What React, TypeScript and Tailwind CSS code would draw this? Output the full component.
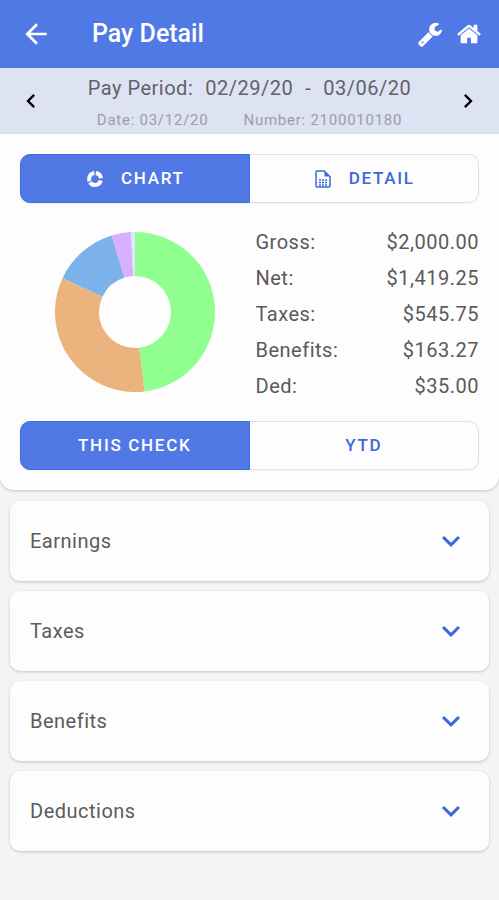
import { useId, useState } from 'react'
import type { ReactNode } from 'react'
import clsx from 'clsx'
import { MdArrowBack, MdChevronLeft, MdChevronRight, MdExpandMore } from 'react-icons/md'

const SUMMARY = [
  { label: 'Gross:', value: '$2,000.00' },
  { label: 'Net:', value: '$1,419.25' },
  { label: 'Taxes:', value: '$545.75' },
  { label: 'Benefits:', value: '$163.27' },
  { label: 'Ded:', value: '$35.00' },
]

const SECTIONS = ['Earnings', 'Taxes', 'Benefits', 'Deductions']

// Shares of the whole ring, clockwise from twelve o'clock.
const SLICES = [
  { share: 0.481, color: '#90ff90' },
  { share: 0.339, color: '#ebb47e' },
  { share: 0.133, color: '#7cb2ea' },
  { share: 0.039, color: '#d8b0ff' },
  { share: 0.008, color: '#dde8fb' },
]

function slicePath(from: number, to: number, outer: number, inner: number) {
  const point = (t: number, r: number) =>
    `${80 + r * Math.sin(t * 2 * Math.PI)} ${80 - r * Math.cos(t * 2 * Math.PI)}`
  const large = to - from > 0.5 ? 1 : 0
  return `M${point(from, outer)}A${outer} ${outer} 0 ${large} 1 ${point(to, outer)}L${point(to, inner)}A${inner} ${inner} 0 ${large} 0 ${point(from, inner)}Z`
}

function DonutChart() {
  let start = 0
  return (
    <svg viewBox="0 0 160 160" className="size-40" role="img" aria-label="Pay breakdown">
      {SLICES.map(({ share, color }) => {
        const d = slicePath(start, start + share, 80, 36)
        start += share
        return <path key={color} d={d} fill={color} />
      })}
    </svg>
  )
}

function WrenchIcon() {
  return (
    <svg viewBox="0 0 1792 1792" className="size-[26px]" fill="currentColor" aria-hidden="true">
      <path d="M448 1472q0-26-19-45t-45-19-45 19-19 45 19 45 45 19 45-19 19-45zm644-420l-682 682q-37 37-90 37-52 0-91-37l-106-108q-38-36-38-90 0-53 38-91l681-681q39 98 114.500 173.500t173.500 114.500zm634-435q0 39-23 106-47 134-164.500 217.500t-258.500 83.500q-185 0-316.500-131.500t-131.500-316.500 131.500-316.500 316.500-131.500q58 0 121.500 16.500t107.500 46.500q16 11 16 28t-16 28l-293 169v224l193 107q5-3 79-48.500t135.500-81 70.500-35.500q15 0 23.500 10t8.500 25z" />
    </svg>
  )
}

function HomeIcon() {
  return (
    <svg viewBox="0 0 1792 1792" className="size-[26px]" fill="currentColor" aria-hidden="true">
      <path d="M1472 992v480q0 26-19 45t-45 19h-384v-384h-256v384h-384q-26 0-45-19t-19-45v-480q0-1 .5-3t.5-3l575-474 575 474q1 2 1 6zm223-69l-62 74q-8 9-21 11h-3q-13 0-21-7l-692-577-692 577q-12 8-24 7-13-2-21-11l-62-74q-8-10-7-23.500t11-21.500l719-599q32-26 76-26t76 26l244 204v-195q0-14 9-23t23-9h192q14 0 23 9t9 23v408l219 182q10 8 11 21.500t-7 23.500z" />
    </svg>
  )
}

function DonutIcon() {
  return (
    <svg viewBox="0 0 20 20" className="size-5" fill="none" stroke="currentColor" strokeWidth="4" aria-hidden="true">
      <path d="M10.800 4.050A6 6 0 0 1 15.950 9.300" />
      <path d="M15.800 11.500A6 6 0 0 1 5 13.300" />
      <path d="M4.400 12.200A6 6 0 0 1 9.300 4.050" />
    </svg>
  )
}

function SheetIcon() {
  return (
    <svg viewBox="0 0 20 20" className="size-5" fill="none" stroke="currentColor" aria-hidden="true">
      <path d="M12 2H4Q3 2 3 3V17Q3 18 4 18H16Q17 18 17 17V7" strokeWidth="1.5" />
      <path d="M11.500 1.300V7.500H17.700Z" fill="currentColor" stroke="none" />
      <path d="M6 11H14M6 13.500H14M6 16H14" strokeWidth="1.4" strokeDasharray="2 1" />
    </svg>
  )
}

type Option = { id: string; label: string; icon?: ReactNode }

function Toggle({ options }: { options: [Option, Option] }) {
  const [active, setActive] = useState(options[0].id)
  return (
    <div className="grid h-[49px] grid-cols-2 rounded-[10px] shadow-xs">
      {options.map(({ id, label, icon }) => (
        <button
          key={id}
          type="button"
          aria-pressed={active === id}
          onClick={() => setActive(id)}
          className={clsx(
            'flex items-center justify-center gap-4 border text-[17px] font-medium tracking-widest',
            'first:rounded-l-[10px] last:rounded-r-[10px] last:border-l-0',
            active === id
              ? 'border-[#3c6ce0] bg-[#5079e5] text-white'
              : 'border-[#e0e1e4] bg-[#fdfdfd] text-[#3b68dc]',
          )}
        >
          {icon}
          {label}
        </button>
      ))}
    </div>
  )
}

function Section({ title }: { title: string }) {
  const [open, setOpen] = useState(false)
  const panelId = useId()
  return (
    <section className="rounded-[10px] bg-[#fdfdfd] shadow-[0_1px_3px_rgba(0,0,0,0.2)]">
      <button
        type="button"
        aria-expanded={open}
        aria-controls={panelId}
        onClick={() => setOpen(!open)}
        className="flex h-20 w-full items-center justify-between px-5 text-xl tracking-wide text-[#5c5c5c]"
      >
        {title}
        <MdExpandMore className={clsx('size-9 text-[#3b68dc]', open && 'rotate-180')} />
      </button>
      <div id={panelId} hidden={!open} className="px-5 pb-5 text-base text-[#8a8a8a]">
        No items
      </div>
    </section>
  )
}

export default function App() {
  return (
    <div className="min-h-screen bg-[#f4f4f4] font-['Roboto',sans-serif]">
      <header className="flex h-[68px] items-center bg-[#5079e5] pr-[17px] pl-5 text-white">
        <button type="button" aria-label="Back">
          <MdArrowBack className="size-8" />
        </button>
        <h1 className="ml-10 flex-1 text-[25px] font-medium">Pay Detail</h1>
        <div className="flex gap-[13px]">
          <button type="button" aria-label="Settings">
            <WrenchIcon />
          </button>
          <button type="button" aria-label="Home">
            <HomeIcon />
          </button>
        </div>
      </header>

      <div className="flex h-[66px] items-center justify-between bg-[#dee3f3] px-[17px]">
        <button type="button" aria-label="Previous pay period">
          <MdChevronLeft className="size-7 text-black" />
        </button>
        <div className="pt-1 text-center">
          <p className="flex justify-center gap-3 text-xl leading-7 tracking-wide text-[#5f626b]">
            <span>Pay Period:</span>
            <span>02/29/20</span>
            <span>-</span>
            <span>03/06/20</span>
          </p>
          <p className="mt-1.5 flex justify-center gap-[35px] text-[15px] leading-6 tracking-wider text-[#9a9da8]">
            <span>Date: 03/12/20</span>
            <span>Number: 2100010180</span>
          </p>
        </div>
        <button type="button" aria-label="Next pay period">
          <MdChevronRight className="size-7 text-black" />
        </button>
      </div>

      <main>
        <div className="rounded-b-[14px] bg-[#fdfdfd] p-5 shadow-[0_1px_3px_rgba(0,0,0,0.2)]">
          <Toggle
            options={[
              { id: 'chart', label: 'CHART', icon: <DonutIcon /> },
              { id: 'detail', label: 'DETAIL', icon: <SheetIcon /> },
            ]}
          />
          <div className="grid h-[218px] grid-cols-2 items-center gap-3">
            <div className="flex justify-center pl-1.5">
              <DonutChart />
            </div>
            <dl className="flex flex-col gap-3 pt-1 text-xl leading-6 tracking-wide text-[#5a5a5a]">
              {SUMMARY.map(({ label, value }) => (
                <div key={label} className="flex justify-between">
                  <dt>{label}</dt>
                  <dd>{value}</dd>
                </div>
              ))}
            </dl>
          </div>
          <Toggle
            options={[
              { id: 'check', label: 'THIS CHECK' },
              { id: 'ytd', label: 'YTD' },
            ]}
          />
        </div>

        <div className="flex flex-col gap-2.5 px-2.5 py-[11px]">
          {SECTIONS.map((title) => (
            <Section key={title} title={title} />
          ))}
        </div>
      </main>
    </div>
  )
}
